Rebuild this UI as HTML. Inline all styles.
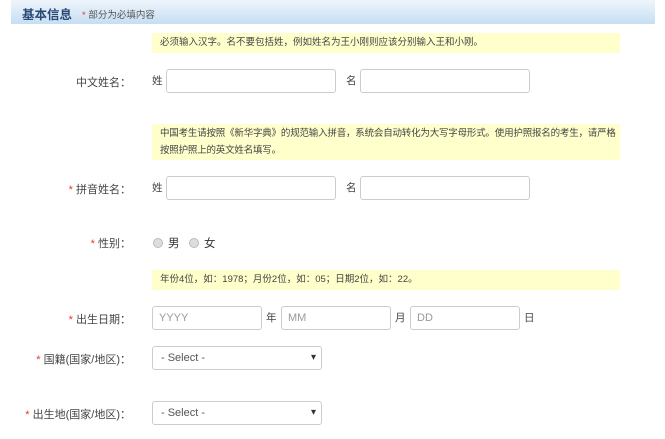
<!DOCTYPE html>
<html><head><meta charset="utf-8"><style>
*{box-sizing:border-box;margin:0;padding:0}
body{width:665px;height:439px;background:#fff;position:relative;overflow:hidden;font-family:"Liberation Sans","Noto Sans CJK SC",sans-serif;color:#333;font-size:12px}
.a{position:absolute}
.hd{left:11px;top:0;width:644px;height:24px;background:linear-gradient(#eef5fb,#c6def3)}
.t{left:22px;top:4px;font-size:12.5px;font-weight:bold;color:#2a4a75}
.st{left:82px;top:7px;font-size:9.5px;color:#555}
.r{color:#e33}
.note{background:#ffffcc;left:152px;width:468px;font-size:9.5px;color:#444;padding:0 8px;line-height:17px}
.lbl{font-size:11px;text-align:right;width:131px;left:0;color:#444}
.in{border:1px solid #ccc;border-radius:3px;height:24px;background:#fff;font-size:11px;color:#999;padding-left:6px;line-height:22px}
.sm{font-size:10.5px;color:#444}
.sel{border:1px solid #ccc;border-radius:3px;height:24px;width:170px;left:152px;font-size:11px;color:#555;padding-left:8px;line-height:22px}
.sel:after{content:"▾";position:absolute;right:5px;top:0;font-size:10px;color:#333}
.rad{width:10px;height:10px;border-radius:50%;background:#ddd;border:1px solid #bbb}
</style></head><body>
<div class="a hd"></div>
<div class="a t">基本信息</div>
<div class="a st"><span class="r">*</span> 部分为必填内容</div>

<div class="a note" style="top:33px;height:20px;line-height:20px">必须输入汉字。名不要包括姓，例如姓名为王小刚则应该分别输入王和小刚。</div>
<div class="a lbl" style="top:74px">中文姓名：</div>
<div class="a sm" style="left:152px;top:73px">姓</div>
<div class="a in" style="left:166px;top:69px;width:170px"></div>
<div class="a sm" style="left:346px;top:73px">名</div>
<div class="a in" style="left:360px;top:69px;width:170px"></div>

<div class="a note" style="top:124px;height:36px;padding-top:1px;padding-right:4px;letter-spacing:-0.2px">中国考生请按照《新华字典》的规范输入拼音，系统会自动转化为大写字母形式。使用护照报名的考生，请严格按照护照上的英文姓名填写。</div>
<div class="a lbl" style="top:181px"><span class="r">*</span> 拼音姓名：</div>
<div class="a sm" style="left:152px;top:180px">姓</div>
<div class="a in" style="left:166px;top:176px;width:170px"></div>
<div class="a sm" style="left:346px;top:180px">名</div>
<div class="a in" style="left:360px;top:176px;width:170px"></div>

<div class="a lbl" style="top:235px"><span class="r">*</span> 性别：</div>
<div class="a rad" style="left:153px;top:238px"></div>
<div class="a" style="left:168px;top:235px;font-size:11.5px">男</div>
<div class="a rad" style="left:189px;top:238px"></div>
<div class="a" style="left:204px;top:235px;font-size:11.5px">女</div>

<div class="a note" style="top:270px;height:20px;line-height:20px">年份4位，如：1978；月份2位，如：05；日期2位，如：22。</div>
<div class="a lbl" style="top:311px"><span class="r">*</span> 出生日期：</div>
<div class="a in" style="left:152px;top:306px;width:110px">YYYY</div>
<div class="a sm" style="left:266px;top:310px">年</div>
<div class="a in" style="left:281px;top:306px;width:110px">MM</div>
<div class="a sm" style="left:395px;top:310px">月</div>
<div class="a in" style="left:410px;top:306px;width:110px">DD</div>
<div class="a sm" style="left:524px;top:310px">日</div>

<div class="a lbl" style="top:351px"><span class="r">*</span> 国籍(国家/地区)：</div>
<div class="a sel" style="top:346px">- Select -</div>
<div class="a lbl" style="top:406px"><span class="r">*</span> 出生地(国家/地区)：</div>
<div class="a sel" style="top:401px">- Select -</div>
</body></html>
